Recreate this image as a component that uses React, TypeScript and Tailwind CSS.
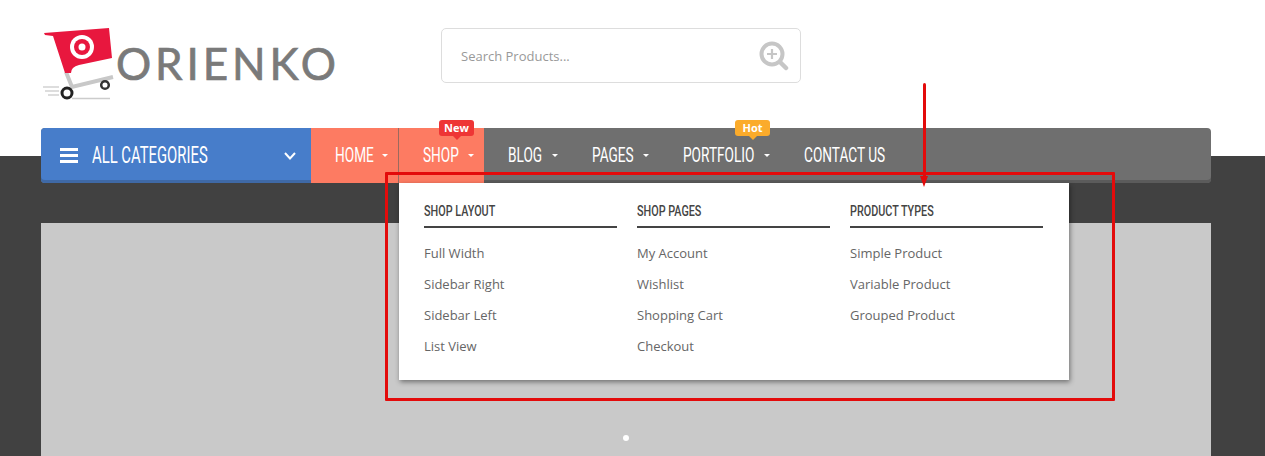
const menus = [
  { title: 'SHOP LAYOUT', width: 'w-[70px]', links: ['Full Width', 'Sidebar Right', 'Sidebar Left', 'List View'] },
  { title: 'SHOP PAGES', width: 'w-[64px]', links: ['My Account', 'Wishlist', 'Shopping Cart', 'Checkout'] },
  { title: 'PRODUCT TYPES', width: 'w-[83px]', links: ['Simple Product', 'Variable Product', 'Grouped Product'] },
]

const navItems = [
  { label: 'HOME', width: 'w-[39px]', active: true, caret: true, divider: true },
  { label: 'SHOP', width: 'w-[37px]', active: true, caret: true, badge: 'New', badgeClass: 'left-[40px] bg-[#ee3535]', tipClass: 'border-t-[#ee3535]' },
  { label: 'BLOG', width: 'w-[36px]', caret: true },
  { label: 'PAGES', width: 'w-[43px]', caret: true },
  { label: 'PORTFOLIO', width: 'w-[73px]', caret: true, badge: 'Hot', badgeClass: 'left-[76px] bg-[#fbab2b]', tipClass: 'border-t-[#fbab2b]' },
  { label: 'CONTACT US', width: 'w-[81px]' },
]

function CartLogo() {
  return (
    <svg width="76" height="72" viewBox="0 0 76 72" className="shrink-0">
      <path d="M25 44 L31 59 L72 49" fill="none" stroke="#c8c8c8" strokeWidth="4" />
      <path d="M3 5 L68 0 L71 30 L38 37 Q30 39 30 45 L24 45 L12 8 L4 7 Z" fill="#e8173e" />
      <circle cx="41" cy="19" r="12" fill="#fff" />
      <circle cx="41" cy="19" r="8" fill="#e8173e" />
      <circle cx="41" cy="19" r="3.5" fill="#fff" />
      <path d="M2 59 H18 M4 63 H18 M7 67 H18" stroke="#bbb" strokeWidth="1.2" />
      <path d="M31 70.5 H69" stroke="#ccc" strokeWidth="1.5" />
      <circle cx="26" cy="65" r="5" fill="#fff" stroke="#222" strokeWidth="3" />
      <circle cx="64" cy="57" r="3.8" fill="#fff" stroke="#333" strokeWidth="2.5" />
    </svg>
  )
}

function SearchIcon() {
  return (
    <svg width="30" height="30" viewBox="0 0 30 30">
      <circle cx="13" cy="13" r="10.5" fill="none" stroke="#c6c6c6" strokeWidth="4" />
      <path d="M13 8 V18 M8 13 H18" stroke="#c6c6c6" strokeWidth="2.2" />
      <path d="M21 21 L27 27" stroke="#c6c6c6" strokeWidth="4.5" strokeLinecap="round" />
    </svg>
  )
}

function Caret() {
  return <span className="ml-[8px] h-0 w-0 border-x-[3px] border-t-[3px] border-x-transparent border-t-white" />
}

export default function App() {
  return (
    <div className="relative h-[456px] w-[1265px] overflow-hidden bg-white font-['Open_Sans',sans-serif]">
      {/* Header */}
      <div className="flex h-[128px] items-start">
        <div className="ml-[41px] mt-[28px] flex w-[400px] items-center">
          <CartLogo />
          <span className="-ml-[1px] -mt-[3px] font-['Lato',sans-serif] text-[44px] leading-[72px] tracking-[3.9px] text-[#7a7a7a] [-webkit-text-stroke:0.7px_#7a7a7a]">ORIENKO</span>
        </div>
        <div className="mt-[28px] flex h-[55px] w-[360px] items-center justify-between rounded-[5px] border border-[#dddddd] pl-[19px] pr-[11px]">
          <span className="pt-[2px] text-[13px] text-[#999999]">Search Products...</span>
          <SearchIcon />
        </div>
      </div>

      {/* Nav */}
      <div className="relative z-10 ml-[41px] flex h-[55px] w-[1170px] rounded-[4px] bg-[#6f6f6f] text-white shadow-[inset_0_-3px_0_#5b5b5b]">
        <div className="flex w-[270px] items-center rounded-l-[4px] bg-[#477dca] pl-[19px] pr-[15px] shadow-[inset_0_-3px_0_#3f69a6]">
          <span className="flex w-[32px] flex-col gap-[3px]">
            <span className="h-[3px] w-[18px] bg-white" />
            <span className="h-[3px] w-[18px] bg-white" />
            <span className="h-[3px] w-[18px] bg-white" />
          </span>
          <span className="flex-1 whitespace-nowrap pt-[2px] font-['Roboto',sans-serif] text-[23px]">
            <span className="inline-block origin-left scale-x-[0.645]">ALL CATEGORIES</span>
          </span>
          <svg width="12" height="8" viewBox="0 0 12 8">
            <path d="M1 1 L6 6.5 L11 1" fill="none" stroke="#fff" strokeWidth="2" />
          </svg>
        </div>
        {navItems.map((item) => (
          <div
            key={item.label}
            className={`relative flex items-center pl-[24px] pr-[10px] ${item.active ? 'bg-[#fd7b62]' : ''} ${item.divider ? 'border-r border-[#9c6a5e]' : ''}`}
          >
            <span className={`${item.width} whitespace-nowrap font-['Roboto',sans-serif] text-[21px]`}>
              <span className="inline-block origin-left scale-x-[0.65]">{item.label}</span>
            </span>
            {item.caret && <Caret />}
            {item.badge && (
              <span className={`absolute top-[-8px] flex h-[16px] w-[35px] items-center justify-center rounded-[3px] text-[11px] font-bold ${item.badgeClass}`}>
                {item.badge}
                <span className={`absolute left-[14px] top-[16px] h-0 w-0 border-x-[4px] border-t-[4px] border-x-transparent ${item.tipClass}`} />
              </span>
            )}
          </div>
        ))}
      </div>

      {/* Slider band */}
      <div className="-mt-[27px] h-[300px] bg-[#414141] pl-[41px] pr-[54px] pt-[67px]">
        <div className="flex h-full justify-center bg-[#c9c9c9] pt-[212px]">
          <span className="h-[6px] w-[6px] rounded-full bg-white" />
        </div>
      </div>

      {/* Mega menu */}
      <div className="absolute left-[399px] top-[183px] z-20 grid h-[197px] w-[670px] grid-cols-3 gap-x-[20px] bg-white pl-[25px] pr-[26px] pt-[18px] shadow-[1px_2px_5px_rgba(0,0,0,0.45)]">
        {menus.map((menu) => (
          <div key={menu.title}>
            <div className="whitespace-nowrap border-b-2 border-[#444444] pb-[5px] font-['Roboto',sans-serif] text-[15px] font-medium leading-[20px] text-[#444444]">
              <span className={`${menu.width} inline-block origin-left scale-x-[0.72]`}>{menu.title}</span>
            </div>
            <ul className="mt-[10px]">
              {menu.links.map((link) => (
                <li key={link} className="h-[31px] text-[13px] leading-[31px] text-[#666666]">{link}</li>
              ))}
            </ul>
          </div>
        ))}
      </div>

      {/* Annotation */}
      <div className="absolute left-[385px] top-[172px] z-30 h-[229px] w-[730px] rounded-[1px] border-[3px] border-[#e30b0b]" />
      <div className="absolute left-[923px] top-[83px] z-30 h-[95px] w-[3px] rounded-t-full bg-[#e30b0b]" />
      <div className="absolute left-[920px] top-[176px] z-30 h-0 w-0 border-x-[4px] border-t-[11px] border-x-transparent border-t-[#e30b0b]" />
    </div>
  )
}
